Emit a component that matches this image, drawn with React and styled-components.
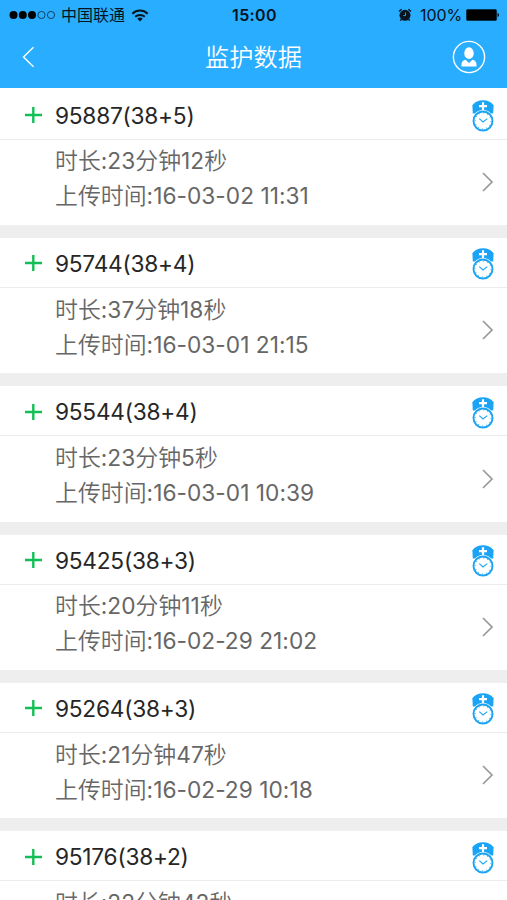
import React from 'react'
import styled, { createGlobalStyle } from 'styled-components'

const theme = {
  blue: '#29adff',
  icon: '#1ba4f5',
  green: '#12bf56',
  gap: '#eeeeee',
  title: '#262626',
  text: '#666666',
}

const GlobalStyle = createGlobalStyle`
  body {
    margin: 0;
    background: ${theme.gap};
    font-family: Inter, "Noto Sans CJK SC", sans-serif;
  }
`

const Screen = styled.div`
  width: 507px;
  height: 900px;
  overflow: hidden;
  background: #fff;
`

const Header = styled.header`
  height: 87.5px;
  background: ${theme.blue};
`

const StatusBar = styled.div`
  display: grid;
  grid-template-columns: 1fr auto 1fr;
  align-items: center;
  height: 30px;
  padding: 0 7px 0 9px;
  font-size: 16px;
  line-height: 30px;
  color: #06141f;
`

const Carrier = styled.div`
  display: flex;
  align-items: center;
  gap: 6px;
`

const Clock = styled.div`
  font-size: 16px;
  font-weight: 600;
  letter-spacing: 0.4px;
`

const Power = styled.div`
  display: flex;
  align-items: center;
  justify-content: flex-end;
`

const Percent = styled.span`
  margin: 0 4px 0 8px;
  letter-spacing: -0.1px;
`

const NavBar = styled.div`
  display: grid;
  grid-template-columns: 60px 1fr 60px;
  align-items: center;
  height: 53px;
  color: #fff;
`

const NavTitle = styled.h1`
  margin: 0;
  padding-top: 2px;
  font-size: 24.2px;
  font-weight: 350;
  line-height: 51px;
  text-align: center;
`

const BackIcon = styled.svg`
  margin-left: 21px;
`

const UserIcon = styled.svg`
  margin-left: 5px;
`

const List = styled.main`
  padding-top: 2px;
`

const Card = styled.section`
  height: 135.35px;
  background: #fff;
  border-bottom: 13px solid ${theme.gap};
`

const CardHead = styled.div`
  display: flex;
  align-items: center;
  box-sizing: border-box;
  height: 50px;
  padding: 2px 12px 0 25px;
  border-bottom: 1px solid #ececec;
`

const CardTitle = styled.h2`
  flex: 1;
  margin: 0 0 0 13px;
  font-size: 22.7px;
  font-weight: 380;
  line-height: 47px;
  letter-spacing: -0.25px;
  color: ${theme.title};
`

const CardBody = styled.div`
  display: flex;
  align-items: center;
  justify-content: space-between;
  height: 85px;
  padding: 0 13px 0 55px;
`

const Lines = styled.div`
  padding-bottom: 7.5px;
`

const Line = styled.div`
  height: 35px;
  font-size: 22.9px;
  font-weight: 350;
  line-height: 35px;
  white-space: nowrap;
  color: ${theme.text};
`

const Num = styled.span`
  font-size: 22.7px;
  font-weight: 370;
  letter-spacing: 0.03px;
`

const Signal = () => (
  <svg width="46" height="10" viewBox="0 0 46 10">
    {[4.5, 13.8, 23].map(x => (
      <circle key={x} cx={x} cy="5" r="4" fill="#000" />
    ))}
    {[32.5, 42].map(x => (
      <circle key={x} cx={x} cy="5" r="3.6" fill="none" stroke="#08283f" strokeWidth="0.8" />
    ))}
  </svg>
)

const Wifi = () => (
  <svg width="18" height="13" viewBox="0 0 18 13" fill="none" stroke="#06141f" strokeWidth="2">
    <path d="M1.3 4.7a11 11 0 0 1 15.4 0" />
    <path d="M4.2 7.8a7 7 0 0 1 9.6 0" />
    <path d="M9 12.5l-2.7-2.7a4 4 0 0 1 5.4 0z" fill="#06141f" stroke="none" />
  </svg>
)

const Alarm = () => (
  <svg width="14" height="14" viewBox="0 0 14 14">
    <circle cx="7" cy="7.3" r="5.5" fill="#06141f" />
    <path d="M1 3.6l2.6-2.4M13 3.6l-2.6-2.4M3.2 11.5l-.9 1.2M10.8 11.5l.9 1.2" stroke="#06141f" strokeWidth="1.4" />
    <path d="M7.5 4.4v3.2H5.2" fill="none" stroke={theme.blue} strokeWidth="0.9" />
  </svg>
)

const Battery = () => (
  <svg width="34" height="12" viewBox="0 0 34 12">
    <rect x="0.4" y="0.4" width="30.2" height="11.2" rx="1.5" fill="#000" stroke="#08283f" strokeWidth="0.8" />
    <path d="M31.5 4c2 .4 2 3.6 0 4z" fill="#06141f" />
  </svg>
)

const Back = () => (
  <BackIcon width="14" height="22" viewBox="0 0 14 22">
    <path d="M12.5 1.2L2.5 11l10 9.8" fill="none" stroke="#fff" strokeWidth="1.4" />
  </BackIcon>
)

const User = () => (
  <UserIcon width="34" height="34" viewBox="0 0 34 34">
    <circle cx="17" cy="17" r="15.6" fill="none" stroke="#fff" strokeWidth="1.4" />
    <ellipse cx="17" cy="13.2" rx="4.7" ry="5.9" fill="#fff" />
    <path d="M13.5 19.8l3.5 3.2 3.5-3.2c3 .7 4.1 2.2 4.1 6.7H9.4c0-4.5 1.1-6 4.1-6.7z" fill="#fff" />
  </UserIcon>
)

const Plus = () => (
  <svg width="17" height="18" viewBox="0 0 17 18">
    <path d="M8.3 1v16M0 9h17" stroke={theme.green} strokeWidth="2.4" />
  </svg>
)

const ClockIcon = styled.svg`
  margin-top: 2px;
`

const NurseClock = () => (
  <ClockIcon width="24" height="34" viewBox="0 0 24 34">
    <path d="M1.4 6.2C3.8 2.9 7.5 1.3 12 1.3s8.2 1.6 10.6 4.9l-.4 8.3H1.8z" fill={theme.icon} />
    <path d="M12 3.2v8M8 7.2h8" stroke="#fff" strokeWidth="2.2" />
    <circle cx="12" cy="22" r="11" fill="#fff" />
    <circle cx="12" cy="22" r="9.5" fill="none" stroke={theme.icon} strokeWidth="1.9" />
    <circle cx="12" cy="22" r="7.9" fill="none" stroke={theme.icon} strokeWidth="1" strokeDasharray="0.9 3.236" />
    <path d="M8.3 19.6l3.7 3.4 4.3-3.4" fill="none" stroke={theme.icon} strokeWidth="1.1" />
  </ClockIcon>
)

const Chevron = () => (
  <svg width="13" height="20" viewBox="0 0 13 20">
    <path d="M2 1l9 9-9 9" fill="none" stroke="#999" strokeWidth="1.7" />
  </svg>
)

const records = [
  { id: '95887(38+5)', min: '23', sec: '12', time: '16-03-02 11:31' },
  { id: '95744(38+4)', min: '37', sec: '18', time: '16-03-01 21:15' },
  { id: '95544(38+4)', min: '23', sec: '5', time: '16-03-01 10:39' },
  { id: '95425(38+3)', min: '20', sec: '11', time: '16-02-29 21:02' },
  { id: '95264(38+3)', min: '21', sec: '47', time: '16-02-29 10:18' },
  { id: '95176(38+2)', min: '22', sec: '42' },
]

const Record = ({ id, min, sec, time }) => (
  <Card>
    <CardHead>
      <Plus />
      <CardTitle>{id}</CardTitle>
      <NurseClock />
    </CardHead>
    <CardBody>
      <Lines>
        <Line>
          时长<Num>:{min}</Num>分钟<Num>{sec}</Num>秒
        </Line>
        <Line>
          {time && <>上传时间<Num>:{time}</Num></>}
        </Line>
      </Lines>
      {time && <Chevron />}
    </CardBody>
  </Card>
)

export default function App() {
  return (
    <Screen>
      <GlobalStyle />
      <Header>
        <StatusBar>
          <Carrier>
            <Signal />
            <span>中国联通</span>
            <Wifi />
          </Carrier>
          <Clock>15:00</Clock>
          <Power>
            <Alarm />
            <Percent>100%</Percent>
            <Battery />
          </Power>
        </StatusBar>
        <NavBar>
          <Back />
          <NavTitle>监护数据</NavTitle>
          <User />
        </NavBar>
      </Header>
      <List>
        {records.map(record => (
          <Record key={record.id} {...record} />
        ))}
      </List>
    </Screen>
  )
}
